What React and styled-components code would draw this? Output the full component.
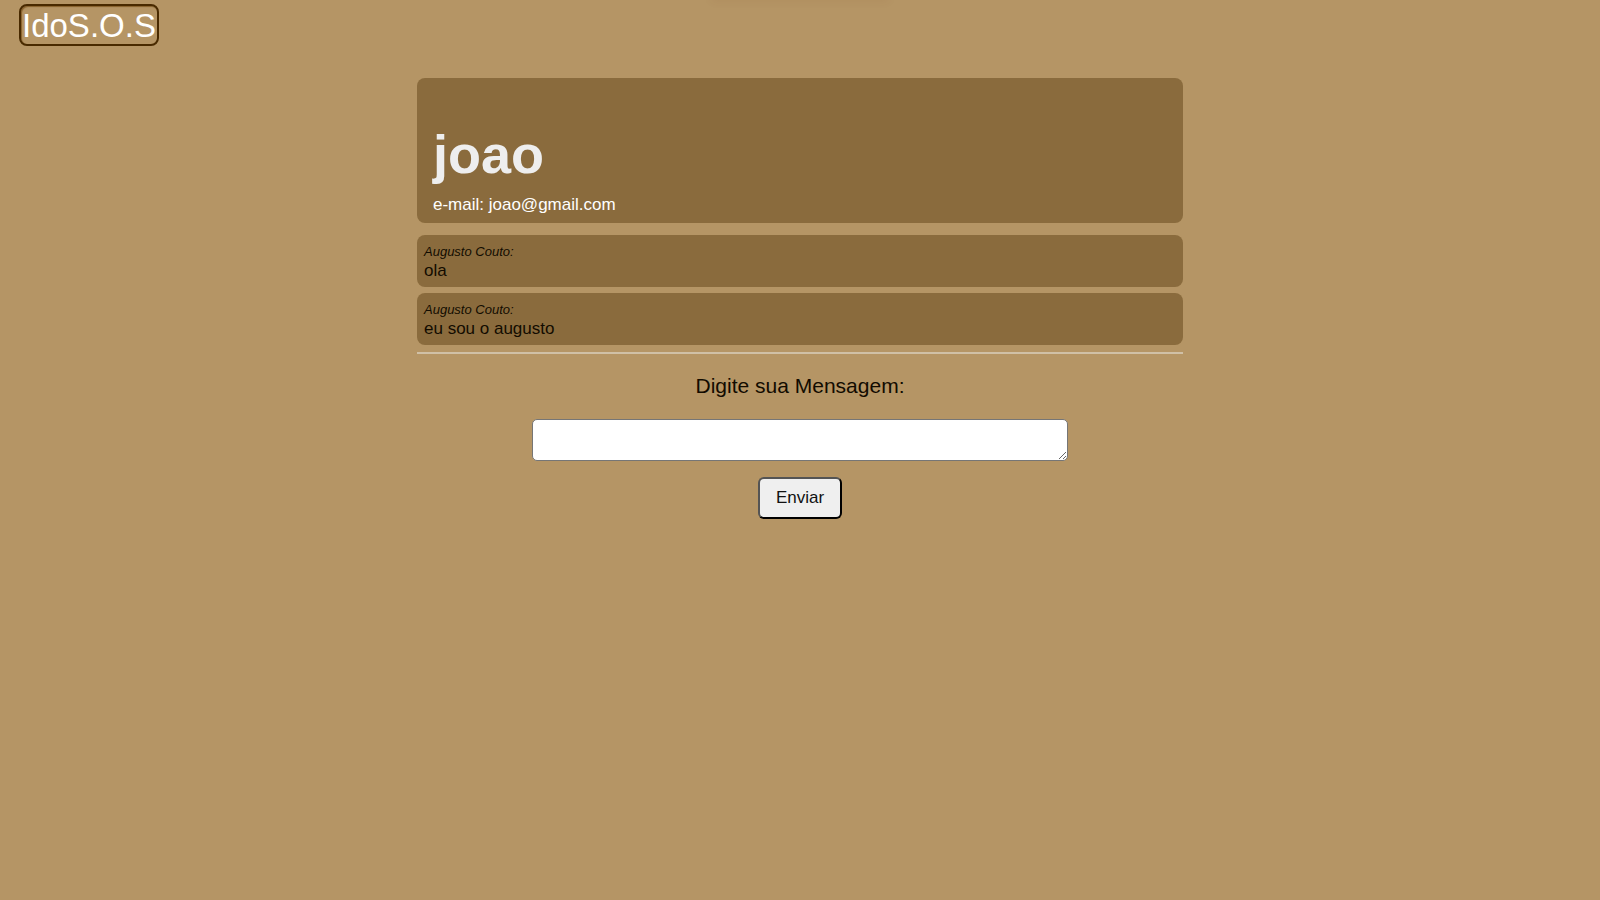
import React from "react";
import styled, { createGlobalStyle } from "styled-components";

const GlobalStyle = createGlobalStyle`
  * { box-sizing: border-box; }
  body {
    margin: 0;
    background: #b59565;
    color: #120b00;
    font-family: "Liberation Sans", Arial, sans-serif;
    font-size: 17px;
    line-height: 20px;
  }
`;

const Header = styled.header`
  display: flex;
  position: relative;
  padding: 4px 19px;

  &::before {
    content: "";
    position: absolute;
    top: -4px;
    left: calc(50% - 88px);
    width: 176px;
    height: 4px;
    box-shadow: 0 0 8px rgba(130, 70, 40, 0.15);
  }
`;

const Logo = styled.a`
  padding: 1px 1px 0;
  border: 2px solid #492a00;
  border-radius: 8px;
  box-shadow: inset 1px 1px 1px #87602b;
  color: #fff;
  font-size: 33px;
  line-height: 37px;
  text-decoration: none;
`;

const Main = styled.main`
  width: 48%;
  max-width: 766px;
  margin: 28px auto 0;
`;

const Card = styled.section`
  background: #8a6b3d;
  border-radius: 8px;
`;

const Profile = styled(Card)`
  padding: 45px 16px 8px;
  margin-bottom: 12px;
  color: #fff;
`;

const Name = styled.h1`
  margin: 0 0 10px;
  color: #eee;
  font-size: 54px;
  line-height: 62px;
`;

const Text = styled.p`
  margin: 0;
`;

const Message = styled(Card).attrs({ as: "article" })`
  padding: 8px 7px 6px;
  margin-bottom: 6px;
`;

const Sender = styled.em`
  display: block;
  font-size: 13px;
  line-height: 18px;
`;

const Divider = styled.hr`
  height: 2px;
  margin: 7px 0 0;
  border: 0;
  background: #d0c0a6;
`;

const Form = styled.form`
  display: flex;
  flex-direction: column;
  align-items: center;
  padding-top: 20px;
`;

const Label = styled.label`
  font-size: 21px;
  line-height: 24px;
`;

const MessageBox = styled.textarea`
  width: 70%;
  height: 42px;
  margin: 21px 0 16px;
  padding: 2px;
  border: 1px solid #767676;
  border-radius: 5px;
  background: #fff;
  font: inherit;
`;

const SendButton = styled.button`
  height: 42px;
  padding: 0 16px;
  border: 2px outset #000;
  border-radius: 6px;
  background: #efefef;
  color: #111;
  font: inherit;
`;

const messages = [
  { sender: "Augusto Couto", text: "ola" },
  { sender: "Augusto Couto", text: "eu sou o augusto" },
];

export default function App() {
  return (
    <>
      <GlobalStyle />
      <Header>
        <Logo href="#">IdoS.O.S</Logo>
      </Header>
      <Main>
        <Profile>
          <Name>joao</Name>
          <Text>e-mail: joao@gmail.com</Text>
        </Profile>
        {messages.map((message) => (
          <Message key={message.text}>
            <Sender>{message.sender}:</Sender>
            <Text>{message.text}</Text>
          </Message>
        ))}
        <Divider />
        <Form onSubmit={(event) => event.preventDefault()}>
          <Label htmlFor="message">Digite sua Mensagem:</Label>
          <MessageBox id="message" />
          <SendButton type="submit">Enviar</SendButton>
        </Form>
      </Main>
    </>
  );
}
